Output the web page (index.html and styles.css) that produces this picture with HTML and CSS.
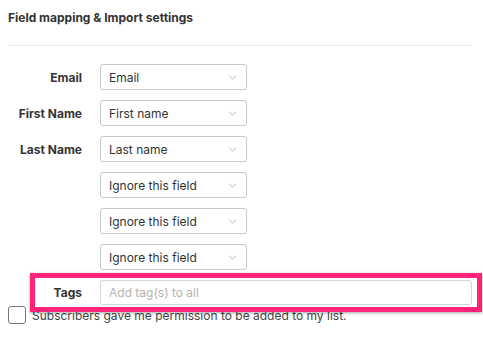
FILE: index.html
```html
<!DOCTYPE html>
<html lang="en">
<head>
  <meta charset="UTF-8" />
  <meta name="viewport" content="width=device-width, initial-scale=1.0"/>
  <title>Field mapping &amp; Import settings</title>
  <link rel="stylesheet" href="styles.css">
</head>
<body>
  <div class="panel">
    <h3 class="title">Field mapping &amp; Import settings</h3>
    <div class="divider"></div>

    <div class="mapping">
      <div class="row">
        <span class="label">Email</span>
        <div class="select"><span>Email</span><svg class="chev" viewBox="0 0 10 6"><path d="M1 1l4 4 4-4"/></svg></div>
      </div>
      <div class="row">
        <span class="label">First Name</span>
        <div class="select"><span>First name</span><svg class="chev" viewBox="0 0 10 6"><path d="M1 1l4 4 4-4"/></svg></div>
      </div>
      <div class="row">
        <span class="label">Last Name</span>
        <div class="select"><span>Last name</span><svg class="chev" viewBox="0 0 10 6"><path d="M1 1l4 4 4-4"/></svg></div>
      </div>
      <div class="row">
        <span class="label"></span>
        <div class="select"><span>Ignore this field</span><svg class="chev" viewBox="0 0 10 6"><path d="M1 1l4 4 4-4"/></svg></div>
      </div>
      <div class="row">
        <span class="label"></span>
        <div class="select"><span>Ignore this field</span><svg class="chev" viewBox="0 0 10 6"><path d="M1 1l4 4 4-4"/></svg></div>
      </div>
      <div class="row">
        <span class="label"></span>
        <div class="select"><span>Ignore this field</span><svg class="chev" viewBox="0 0 10 6"><path d="M1 1l4 4 4-4"/></svg></div>
      </div>
    </div>

    <div class="row tags-row">
      <span class="label">Tags</span>
      <input class="tags-input" type="text" placeholder="Add tag(s) to all">
      <span class="highlight"></span>
    </div>

    <label class="consent">
      <span class="check"></span>
      <span>Subscribers gave me permission to be added to my list.</span>
    </label>
  </div>
</body>
</html>
```

FILE: styles.css
```css
* {
  margin: 0;
  padding: 0;
  box-sizing: border-box;
  font-family: Inter, 'Noto Sans', sans-serif;
}

body {
  background: #fff;
  color: #333;
}

.panel {
  width: 472px;
  padding: 10px 0 0 8px;
}

.title {
  font-size: 12px;
  font-weight: 700;
  color: #333;
  line-height: 16px;
}

.divider {
  height: 1px;
  background: #e6e6e6;
  margin-top: 19px;
}

.mapping {
  display: flex;
  flex-direction: column;
  gap: 10px;
  margin-top: 18px;
}

.row {
  display: flex;
  align-items: center;
  gap: 18px;
}

.label {
  width: 74px;
  flex-shrink: 0;
  text-align: right;
  font-size: 12px;
  font-weight: 700;
  color: #333;
}

.select {
  width: 147px;
  height: 26px;
  border: 1px solid #c8c8c8;
  border-radius: 3px;
  display: flex;
  align-items: center;
  justify-content: space-between;
  padding: 0 9px 0 8px;
  font-size: 12px;
  color: #333;
}

.chev {
  width: 9px;
  height: 5px;
  fill: none;
  stroke: #b5b5b5;
  stroke-width: 1.2;
}

.tags-row {
  position: relative;
  margin-top: 10px;
}

.tags-input {
  flex: 1;
  height: 25px;
  border: 1px solid #d6d6d6;
  border-radius: 3px;
  padding: 0 8px;
  font-size: 12px;
  color: #333;
}

.tags-input::placeholder {
  color: #b3b3b3;
}

.highlight {
  position: absolute;
  left: 22px;
  right: -10px;
  top: -7px;
  bottom: -7px;
  border: 5px solid #ff2479;
  box-shadow: 0 1px 3px rgba(0, 0, 0, 0.35);
  pointer-events: none;
}

.consent {
  display: flex;
  align-items: center;
  gap: 6px;
  margin-top: 1px;
  font-size: 12px;
  color: #444;
}

.check {
  width: 18px;
  height: 18px;
  border: 1px solid #777;
  border-radius: 3px;
  flex-shrink: 0;
}
```
